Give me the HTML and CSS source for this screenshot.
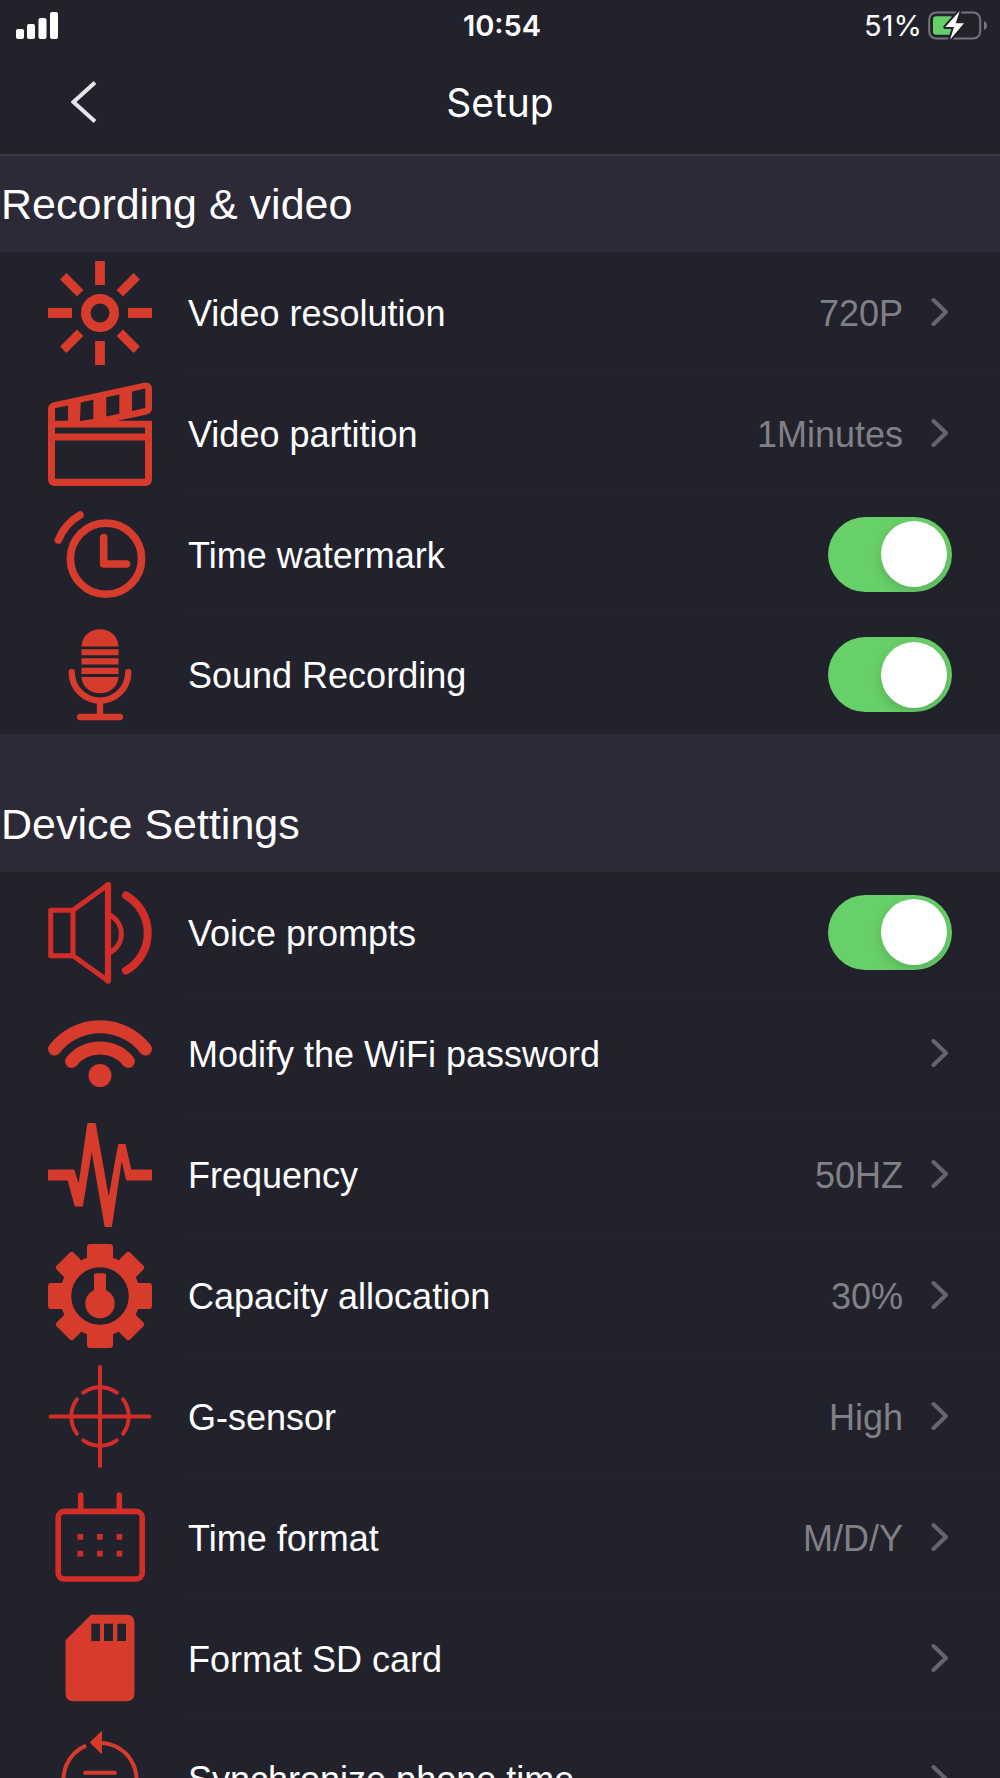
FILE: index.html
```html
<!DOCTYPE html>
<html lang="en">
<head>
    <meta charset="UTF-8">
    <meta name="viewport" content="width=device-width, initial-scale=1.0">
    <title>Setup</title>
    <link rel="stylesheet" href="styles.css">
</head>
<body>

    <header class="top">
        <div class="status-bar">
            <svg class="signal" viewBox="0 0 42 27" aria-hidden="true">
                <rect x="0" y="17" width="8" height="10" rx="2"/>
                <rect x="11" y="12" width="8" height="15" rx="2"/>
                <rect x="22.500" y="6" width="8" height="21" rx="2"/>
                <rect x="34" y="0" width="8" height="27" rx="2"/>
            </svg>
            <span class="clock">10:54</span>
            <div class="battery">
                <span>51%</span>
                <svg viewBox="0 0 60 31" aria-hidden="true">
                    <rect class="battery-case" x="1.200" y="2.500" width="51" height="26" rx="7"/>
                    <path class="battery-tip" d="M56 11c4 1.500 4 7.500 0 9z"/>
                    <rect class="battery-level" x="5" y="6.200" width="20" height="18.500" rx="3"/>
                    <path class="battery-bolt" d="M31.700 1L17.300 17h8.700l-4 12.700L36 13.300h-8.300z"/>
                </svg>
            </div>
        </div>
        <nav class="nav-bar">
            <button class="back" type="button" aria-label="Back">
                <svg viewBox="0 0 26 42" aria-hidden="true"><path d="M24 1.500L2.500 21 24 40.500"/></svg>
            </button>
            <h1>Setup</h1>
        </nav>
    </header>

    <main>
        <section>
            <h2>Recording &amp; video</h2>

            <button class="row" type="button">
                <svg class="icon" viewBox="0 0 104 104" aria-hidden="true">
                    <circle class="line" cx="52" cy="52" r="14.200" stroke-width="9.600"/>
                    <path class="line" stroke-width="9.800" d="M52 0v24M52 80v24M0 52h24M80 52h24"/>
                    <path class="line" stroke-width="9" transform="rotate(45 52 52)" d="M52 0v24M52 80v24M0 52h24M80 52h24"/>
                </svg>
                <span class="content">
                    <span class="label">Video resolution</span>
                    <span class="value">720P</span>
                    <svg class="chevron" viewBox="0 0 18 30" aria-hidden="true"><path d="M2.500 3L15 15 2.500 27"/></svg>
                </span>
            </button>

            <button class="row" type="button">
                <svg class="icon" viewBox="0 0 104 104" aria-hidden="true">
                    <path fill-rule="evenodd" d="M0 27q0-5 5-6.500L96 .700q8-1 8 7V26q0 5-5 6.500L69.500 38.800H104V97q0 7-7 7H7q-7 0-7-7zM7 26.200v12.600h13V23.500zM32.700 20.500L32 39l13.300-2V17.800zM58.300 15.200v19.300l13-2.700V12.500zM84 9.500V29l13.300-3V6.500zM7 45.500v6h90v-6zM7 58.500v38.300h90V58.500z"/>
                </svg>
                <span class="content">
                    <span class="label">Video partition</span>
                    <span class="value">1Minutes</span>
                    <svg class="chevron" viewBox="0 0 18 30" aria-hidden="true"><path d="M2.500 3L15 15 2.500 27"/></svg>
                </span>
            </button>

            <label class="row">
                <svg class="icon" viewBox="0 0 104 104" aria-hidden="true">
                    <g class="line round" stroke-width="7.600">
                        <circle cx="58" cy="55.700" r="35.600"/>
                        <path d="M55.700 34.500V61H78.500"/>
                        <path d="M32 12A51 51 0 0 0 10.300 37"/>
                    </g>
                </svg>
                <span class="content">
                    <span class="label">Time watermark</span>
                    <input class="toggle" type="checkbox" role="switch" checked>
                </span>
            </label>

            <label class="row">
                <svg class="icon" viewBox="0 0 104 104" aria-hidden="true">
                    <path d="M33.500 23.500a18.500 17.200 0 0 1 37 0zM33.500 26.300h37v6h-37zM33.500 35.300h37v6.300h-37zM33.500 44.700h37V51h-37zM33.500 54h37a18.500 16.300 0 0 1-37 0z"/>
                    <g class="line round" stroke-width="6.400">
                        <path d="M23.700 49.300a28.300 28.300 0 0 0 56.600 0M52 78v15M32.200 94h39.600"/>
                    </g>
                </svg>
                <span class="content">
                    <span class="label">Sound Recording</span>
                    <input class="toggle" type="checkbox" role="switch" checked>
                </span>
            </label>
        </section>

        <section>
            <h2 class="spaced">Device Settings</h2>

            <label class="row">
                <svg class="icon crimson" viewBox="0 0 104 104" aria-hidden="true">
                    <g class="line round" stroke-width="5">
                        <path d="M25 29.200H2.700v45.600H25zL60 3.800M25 74.800L60 99.800"/>
                        <path d="M62 34.200A21 21 0 0 1 62 71.500"/>
                        <path stroke-width="6.200" d="M60 4v95.500"/>
                        <path stroke-width="8" d="M78 14.500a43.200 43.200 0 0 1 0 75"/>
                    </g>
                </svg>
                <span class="content">
                    <span class="label">Voice prompts</span>
                    <input class="toggle" type="checkbox" role="switch" checked>
                </span>
            </label>

            <button class="row" type="button">
                <svg class="icon" viewBox="0 0 104 104" aria-hidden="true">
                    <g class="line round" stroke-width="13">
                        <path d="M6.500 47a57.500 57.500 0 0 1 91 0"/>
                        <path d="M23.500 59.500a37 37 0 0 1 57 0"/>
                    </g>
                    <circle cx="52" cy="73.500" r="11.500"/>
                </svg>
                <span class="content">
                    <span class="label">Modify the WiFi password</span>
                    <svg class="chevron" viewBox="0 0 18 30" aria-hidden="true"><path d="M2.500 3L15 15 2.500 27"/></svg>
                </span>
            </button>

            <button class="row" type="button">
                <svg class="icon" viewBox="0 0 104 104" aria-hidden="true">
                    <path stroke="#d63b2c" stroke-width="2" stroke-linejoin="round" d="M1 47.500h24.500L31 65 40.300 1h6.500l13.900 78L71 22h5.700l5.800 25.500H103v9H79L73.500 33 63 103h-5.500L43.700 23 34 82.500h-6.500l-7-26H1z"/>
                </svg>
                <span class="content">
                    <span class="label">Frequency</span>
                    <span class="value">50HZ</span>
                    <svg class="chevron" viewBox="0 0 18 30" aria-hidden="true"><path d="M2.500 3L15 15 2.500 27"/></svg>
                </span>
            </button>

            <button class="row" type="button">
                <svg class="icon" viewBox="0 0 104 104" aria-hidden="true">
                    <circle class="line" cx="52" cy="52" r="34.500" stroke-width="11.500"/>
                    <path d="M39 17V3q0-3 3-3h20q3 0 3 3v14zM39 87v14q0 3 3 3h20q3 0 3-3V87zM17 39H3q-3 0-3 3v20q0 3 3 3h14zM87 39h14q3 0 3 3v20q0 3-3 3H87z"/>
                    <path transform="rotate(45 52 52)" d="M40 19V3q0-3 3-3h18q3 0 3 3v16zM40 85v16q0 3 3 3h18q3 0 3-3V85zM19 40H3q-3 0-3 3v18q0 3 3 3h16zM85 40h16q3 0 3 3v18q0 3-3 3H85z"/>
                    <circle cx="52" cy="59.700" r="14.700"/>
                    <rect x="46" y="29.300" width="12" height="24" rx="1.500"/>
                </svg>
                <span class="content">
                    <span class="label">Capacity allocation</span>
                    <span class="value">30%</span>
                    <svg class="chevron" viewBox="0 0 18 30" aria-hidden="true"><path d="M2.500 3L15 15 2.500 27"/></svg>
                </span>
            </button>

            <button class="row" type="button">
                <svg class="icon crimson" viewBox="0 0 104 104" aria-hidden="true">
                    <g class="line round" stroke-width="4">
                        <path d="M52 2v99M2.500 51.500h99"/>
                        <path d="M35.300 27.700a28.700 28.700 0 0 1 33.400 0M35.300 75.300a28.700 28.700 0 0 0 33.400 0M28.900 34.400a28.700 28.700 0 0 0 0 34.200M75.100 34.400a28.700 28.700 0 0 1 0 34.200"/>
                    </g>
                </svg>
                <span class="content">
                    <span class="label">G-sensor</span>
                    <span class="value">High</span>
                    <svg class="chevron" viewBox="0 0 18 30" aria-hidden="true"><path d="M2.500 3L15 15 2.500 27"/></svg>
                </span>
            </button>

            <button class="row" type="button">
                <svg class="icon crimson" viewBox="0 0 104 104" aria-hidden="true">
                    <g class="line round" stroke-width="5.600">
                        <rect x="10.200" y="25.400" width="84" height="67.600" rx="6"/>
                        <path d="M32.700 9v14M71.300 9v14"/>
                    </g>
                    <path d="M29.500 48h5.700v5.700h-5.700zM49 48h5.700v5.700H49zM68.600 48h5.700v5.700h-5.700zM29.500 64.700h5.700v5.700h-5.700zM49 64.700h5.700v5.700H49zM68.600 64.700h5.700v5.700h-5.700z"/>
                </svg>
                <span class="content">
                    <span class="label">Time format</span>
                    <span class="value">M/D/Y</span>
                    <svg class="chevron" viewBox="0 0 18 30" aria-hidden="true"><path d="M2.500 3L15 15 2.500 27"/></svg>
                </span>
            </button>

            <button class="row" type="button">
                <svg class="icon" viewBox="0 0 104 104" aria-hidden="true">
                    <path fill-rule="evenodd" d="M43 7.700h35.500q8 0 8 8v70.600q0 8-8 8h-53q-8 0-8-8V33.300zM43.300 16.700V34H52V16.700zM56 16.700V34h9V16.700zM69.300 16.700V34H78V16.700z"/>
                </svg>
                <span class="content">
                    <span class="label">Format SD card</span>
                    <svg class="chevron" viewBox="0 0 18 30" aria-hidden="true"><path d="M2.500 3L15 15 2.500 27"/></svg>
                </span>
            </button>

            <button class="row" type="button">
                <svg class="icon" viewBox="0 0 104 104" aria-hidden="true">
                    <path d="M41.700 15.500L53 4.500q1-.500 1 .500v21q0 1-1 .500z"/>
                    <g class="line round" stroke-width="4">
                        <path d="M36.500 19.400A36.500 36.500 0 1 0 54 16"/>
                        <path d="M37 45.800h30M37 59h30"/>
                    </g>
                </svg>
                <span class="content">
                    <span class="label">Synchronize phone time</span>
                    <svg class="chevron" viewBox="0 0 18 30" aria-hidden="true"><path d="M2.500 3L15 15 2.500 27"/></svg>
                </span>
            </button>
        </section>
    </main>

</body>
</html>
```

FILE: styles.css
```css
* {
    box-sizing: border-box;
}

body {
    display: flex;
    flex-direction: column;
    height: 100vh;
    margin: 0;
    background-color: #22222d;
    color: #fff;
    font-family: "Liberation Sans", Arial, sans-serif;
}

svg {
    display: block;
    flex: none;
}

/* Status bar and title */
.top {
    flex: none;
    border-bottom: 2px solid #3a3843;
    font-family: Inter, sans-serif;
}

.status-bar {
    display: grid;
    grid-template-columns: 1fr auto 1fr;
    align-items: center;
    height: 50px;
    padding: 0 12px 0 16px;
    font-size: 29px;
}

.signal {
    width: 42px;
    height: 27px;
    fill: #fff;
}

.clock {
    font-weight: 600;
}

.battery {
    display: flex;
    justify-content: flex-end;
    align-items: center;
    gap: 6px;
}

.battery svg {
    width: 60px;
    height: 31px;
}

.battery-case {
    fill: none;
    stroke: #74747d;
    stroke-width: 2;
}

.battery-tip {
    fill: #74747d;
}

.battery-level {
    fill: #64cf66;
}

.battery-bolt {
    fill: #fff;
    stroke: #22222d;
    stroke-width: 4;
    stroke-linejoin: round;
    paint-order: stroke;
}

.nav-bar {
    display: grid;
    grid-template-columns: 1fr auto 1fr;
    align-items: center;
    height: 104px;
    padding: 0 48px;
}

.nav-bar h1 {
    margin: 0;
    font-size: 39px;
    font-weight: 400;
}

.back {
    justify-self: start;
    padding: 8px 23px;
    border: 0;
    background: none;
    cursor: pointer;
}

.back svg {
    width: 26px;
    height: 42px;
    fill: none;
    stroke: #e6e6ea;
    stroke-width: 4;
}

/* Settings list */
main {
    flex: 1;
    overflow-y: auto;
    scrollbar-width: none;
}

h2 {
    margin: 0;
    padding-left: 1px;
    background-color: #2c2a37;
    font-size: 43px;
    font-weight: 400;
    line-height: 96px;
}

h2.spaced {
    padding-top: 42px;
}

.row {
    display: flex;
    align-items: center;
    gap: 36px;
    width: 100%;
    height: 121px;
    padding: 0 0 0 48px;
    border: 0;
    background: none;
    color: inherit;
    font: inherit;
    font-size: 36px;
    text-align: left;
    cursor: pointer;
}

.row:last-child {
    height: 119px;
}

.icon {
    width: 104px;
    height: 104px;
    fill: #d63b2c;
    stroke: none;
}

.icon .line {
    fill: none;
    stroke: #d63b2c;
}

.icon.crimson {
    fill: #d32d27;
}

.icon.crimson .line {
    stroke: #d32d27;
}

.icon .round {
    stroke-linecap: round;
    stroke-linejoin: round;
}

.content {
    display: flex;
    flex: 1;
    align-items: center;
    height: 100%;
    padding-right: 48px;
    border-bottom: 1px solid #252530;
}

.row:last-child .content {
    border-bottom: 0;
}

.label,
.value {
    padding-top: 3px;
}

.label {
    flex: 1;
}

.value {
    color: #808085;
}

.chevron {
    width: 18px;
    height: 30px;
    margin: 0 3px 0 28px;
    fill: none;
    stroke: #65656e;
    stroke-width: 4;
    stroke-linecap: round;
    stroke-linejoin: round;
}

.toggle {
    display: flex;
    justify-content: flex-end;
    align-items: center;
    appearance: none;
    width: 124px;
    height: 75px;
    margin: 0;
    padding: 0 5px;
    border-radius: 38px;
    background-color: #68d068;
    cursor: pointer;
}

.toggle::before {
    content: "";
    width: 66px;
    height: 66px;
    border-radius: 50%;
    background-color: #fff;
    box-shadow: 0 4px 12px rgba(0, 0, 0, 0.16);
}

.toggle:not(:checked) {
    justify-content: flex-start;
    background-color: #3a3843;
}
```
